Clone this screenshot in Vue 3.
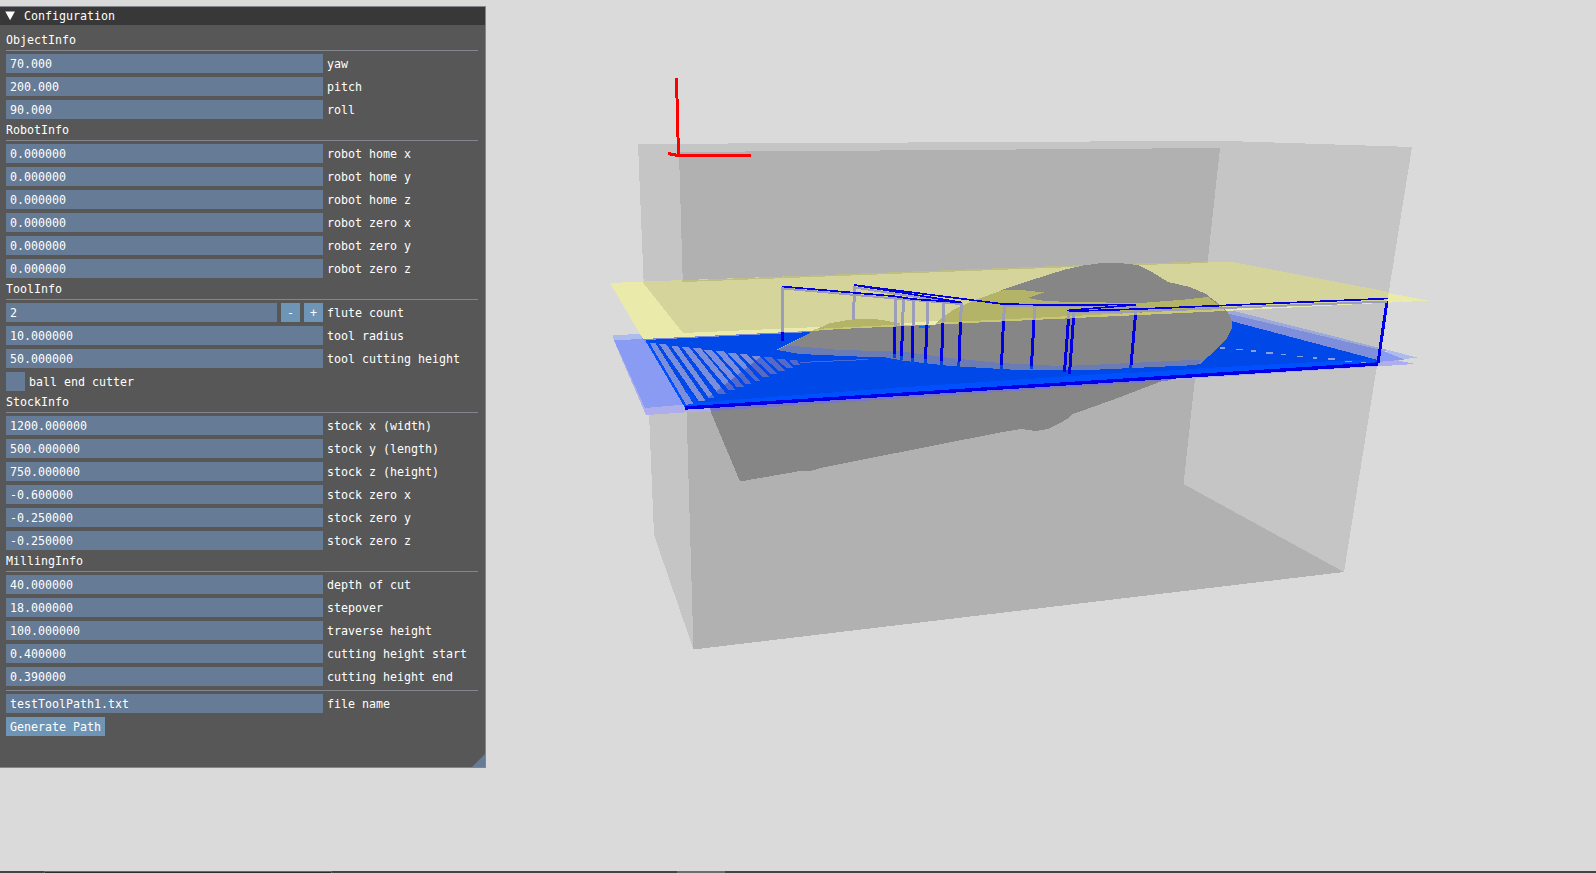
<script setup>
import { ref } from 'vue'

const sections = ref([
  {
    title: 'ObjectInfo',
    fields: [
      { label: 'yaw', value: '70.000' },
      { label: 'pitch', value: '200.000' },
      { label: 'roll', value: '90.000' },
    ],
  },
  {
    title: 'RobotInfo',
    fields: [
      { label: 'robot home x', value: '0.000000' },
      { label: 'robot home y', value: '0.000000' },
      { label: 'robot home z', value: '0.000000' },
      { label: 'robot zero x', value: '0.000000' },
      { label: 'robot zero y', value: '0.000000' },
      { label: 'robot zero z', value: '0.000000' },
    ],
  },
  {
    title: 'ToolInfo',
    fields: [
      { label: 'flute count', value: '2', type: 'stepper' },
      { label: 'tool radius', value: '10.000000' },
      { label: 'tool cutting height', value: '50.000000' },
      { label: 'ball end cutter', type: 'check' },
    ],
  },
  {
    title: 'StockInfo',
    fields: [
      { label: 'stock x (width)', value: '1200.000000' },
      { label: 'stock y (length)', value: '500.000000' },
      { label: 'stock z (height)', value: '750.000000' },
      { label: 'stock zero x', value: '-0.600000' },
      { label: 'stock zero y', value: '-0.250000' },
      { label: 'stock zero z', value: '-0.250000' },
    ],
  },
  {
    title: 'MillingInfo',
    fields: [
      { label: 'depth of cut', value: '40.000000' },
      { label: 'stepover', value: '18.000000' },
      { label: 'traverse height', value: '100.000000' },
      { label: 'cutting height start', value: '0.400000' },
      { label: 'cutting height end', value: '0.390000' },
    ],
  },
])

// Uncut gaps between neighbouring passes
const gaps = [
  'M649 343.3h6.5l39 62h-8z',
  'M659.3 344.3h7l39.7 57h-7z',
  'M671 345.7h6.5l37.5 52.6h-6z',
  'M682.3 347.3h7l37 46.7h-8z',
  'M693.3 348.3h7.5l35 42h-7z',
  'M704 350h8l32.5 37.3h-7.5z',
  'M716 351.3h8l28 33h-6z',
  'M728 353h7.5l24.5 28h-5z',
  'M739.3 354h7.5l23 23.3h-7z',
  'M751.3 355.7h8l18.5 18.6h-7z',
  'M763.3 357.3h8l15 14h-7z',
  'M776 359h8l9.5 9.3h-6.5z',
  'M789.3 360h7.5l3.5 5.3h-7z',
]

// Retract moves: dimmed while behind the upper plane, solid underneath
const plunges = [
  { a: [782.5, 287], b: [782.5, 332], c: [782.5, 341] },
  { a: [854.5, 286], b: [853.5, 320], c: null },
  { a: [895.5, 297], b: [895, 327], c: [894.5, 354], d: [894.5, 358] },
  { a: [903.5, 299], b: [902.5, 326], c: [901.5, 356], d: [901.5, 360] },
  { a: [913.5, 300], b: [913, 326], c: [912.5, 358], d: [912.5, 362] },
  { a: [927.5, 301], b: [927, 325], c: [925.5, 359], d: [925.5, 364] },
  { a: [943.5, 302], b: [943, 323], c: [941.5, 361], d: [941.5, 366] },
  { a: [961.5, 303], b: [960.5, 322], c: [959, 362], d: [958.5, 367] },
  { a: [1004.5, 305], b: [1003.5, 321], c: [1001.5, 365], d: [1001.5, 369] },
  { a: [1034.5, 306], b: [1034, 320], c: [1031.5, 366], d: [1031, 369] },
  { a: [1069, 311], b: [1068.5, 319], c: [1064.5, 372] },
  { a: [1074, 313], b: [1073.5, 318], c: [1069.5, 374] },
  { a: [1136, 306], b: [1135.5, 315], c: [1131, 365], d: [1130.5, 369] },
]

const seg = (p, q) => `M${p[0]} ${p[1]}L${q[0]} ${q[1]}`

const dashes = [
  [1220, 347, 5], [1236, 348.5, 7], [1251, 350, 5], [1266, 352, 7], [1281, 353.5, 5],
  [1297, 355.5, 6], [1313, 357, 4], [1328, 358, 7], [1345, 360.5, 7], [1361, 361.5, 5],
]
</script>

<template>
  <main class="viewport">
    <svg class="scene" width="1596" height="873" viewBox="0 0 1596 873" shape-rendering="crispEdges">
      <!-- stock -->
      <path fill="#c5c5c5" d="M638 144L1181 141H1228L1412 147L1344 572L693.5 649.5L654 535Z" />
      <path fill="#b1b1b1" d="M679 152L1220 148L1183.5 484L1344 572L693.5 649.5Z" />

      <!-- part, lower body -->
      <path fill="#868686" d="M706 400L710 410L740 481.5L803 470.5H812L825 467L1000 432.5L1021 429L1036 431L1048 429L1060 423L1067 419L1073 414L1115 399L1170 378L1180 340L900 350Z" />

      <!-- cutting planes -->
      <path fill="#adbceb" d="M613 335L642 334L646 342H614ZM1388 350L1419 358L1378 360Z" />
      <path fill="#9daad9" d="M1222 308L1388 350L1376 356L1222 318Z" />
      <path fill="#aeaeec" d="M614 341L646 415L1415 364L1378 356L686 400Z" />
      <path fill="#7777c6" d="M707 402L711 411L1166 381L1200 370L760 396Z" />
      <path fill="#899bf3" d="M614 340L647 339L690 404L645 408ZM1378 349L1404 359.5L1378 362Z" />
      <path fill="#7f8edb" d="M1226 313L1379 349.5L1378 361L1226 330Z" />
      <path fill="#7b8cdb" d="M642 338.5L812 331V334L646 342Z" />

      <!-- milled area -->
      <path fill="#0048e8" d="M646 340L812 332L776 350L1200 356L1231 321L1376 359.5L1378 363L686 407.5Z" />
      <g fill="#7b8edb">
        <path v-for="g in gaps" :key="g" :d="g" />
      </g>
      <clipPath id="shadow">
        <path d="M704 401L763 355L810 357V372L720 402Z" />
      </clipPath>
      <g fill="#556ac8" clip-path="url(#shadow)">
        <path v-for="g in gaps" :key="g" :d="g" />
      </g>
      <path stroke="#0050ff" stroke-width="2.5" fill="none" d="M647 341L686 407M685 389L698 405" />
      <path fill="#0050ff" d="M697 402.5L900 387.5L1140 371.5L1372 359L1378 362L686 407.5V405Z" />
      <path stroke="#0000e8" stroke-width="3.4" fill="none" d="M685 408L1378 364" />
      <path stroke="#4b68d0" stroke-width="1" fill="none" d="M800 362.5L822 361.5L868 359.5" />
      <g fill="#8d9ede">
        <rect v-for="d in dashes" :key="d[0]" :x="d[0]" :y="d[1]" :width="d[2]" height="1.5" />
      </g>

      <!-- yellow plane -->
      <path fill="#eaeaab" d="M610 283L671 280.5L1208 261.5H1228L1428 300.7L1223 311L643 339Z" />
      <path fill="#d5d49b" d="M643 281.5L1205 261.5H1230L1389 292L1387 302L1223 309L683 333L644 284Z" />
      <path stroke="#bfbe87" stroke-width="1.6" fill="none" d="M682 281.3L900 272.8L1080 266L1208 262.2" />

      <!-- part, upper body -->
      <path fill="#868686" d="M777 350L795 341L815 330L895 326L940 324L1003 289.5L1030 280.5L1065 269.5L1083 265.5L1100 263.3H1122L1138 265L1152 272L1168 282L1190 287L1206 294L1220 305L1228 313L1232 321V328L1227 338L1217 349L1200 364L1080 370L900 358Z" />
      <path fill="#b4b469" d="M815 330L829 323.5L845 320.5L858 319H875L888 321L897 323L902 324L938 321L953 310L975 300L1003 290L1026 290.5L1044 292.5L1028 298L1045 301L1072 302L1140 303L1180 300L1208 297L1223 308L1140 312.5L900 325Z" />
      <path fill="#c8c773" d="M815 329L900 324.5L1223 308.5L1225 311L1140 315L840 329L812 331Z" />
      <path fill="#eeecaf" d="M899 324L930 321H938L934 325H900Z" />
      <path fill="#0070ff" d="M919 326H930V327.5H919Z" />
      <path fill="#6b7cb5" d="M777 350L789 345.5L840 350L903 351.5L920 354L950 358L1000 363L1060 366L1090 365L1130 363L1202 359.5L1197 365L1130 369.5H1010L950 366L905 361L880 357.5L800 354Z" />
      <path fill="#0048e8" d="M777 351L800 354L840 356.5H880L905 361L950 366L1010 369.5H1100L1198 365L1205 368L1130 373L880 380Z" />
      <path stroke="#4b68d0" stroke-width="1" fill="none" d="M800 362.5L822 361.5L868 359.5" />

      <!-- rapid moves -->
      <g fill="none" stroke-width="3">
        <template v-for="(p, i) in plunges" :key="i">
          <path stroke="#9c9cbb" :d="seg(p.a, p.b)" />
          <path v-if="p.c" stroke="#0000e2" :d="seg(p.b, p.c)" />
          <path v-if="p.d" stroke="#0048d8" :d="seg(p.c, p.d)" />
        </template>
        <path stroke="#0000ee" d="M1387 301L1378 363" />
      </g>
      <path fill="none" stroke="#9c9cbb" stroke-width="2" d="M783 288.5L895 298.5L961 304M855 287.5L961 304M1004 306L1135 306.5M1069 312.5L1137 311.5L1387 301.5M1074 310L1135 307.5" />
      <path fill="none" stroke="#0000e2" stroke-width="1.7" d="M782 286.5L895 296.3L912 299L962 302.5M854 285L910 294L962 302.5M854 285L1003 304L1048 305L1136 304.5M1067 310.5L1136 304.8M1069 311.3L1140 309L1388 298.5" />

      <!-- origin axes -->
      <path fill="none" stroke="#f00" stroke-width="3" d="M676.5 78L678.5 156M675 155.5H750.5M668 153.5L678 155.5" />
    </svg>

    <section class="panel">
      <header class="titlebar">
        <svg class="arrow" width="10" height="10" viewBox="0 0 10 10"><path fill="#fff" d="M.3 .5H9.9L5.1 9.2Z" /></svg>
        <span>Configuration</span>
      </header>
      <div class="content">
        <template v-for="s in sections" :key="s.title">
          <div class="heading">{{ s.title }}</div>
          <div class="separator"></div>
          <div v-for="f in s.fields" :key="f.label" class="row">
            <span v-if="f.type === 'check'" class="check"></span>
            <div v-else-if="f.type === 'stepper'" class="control">
              <span class="input">{{ f.value }}</span>
              <button class="step">-</button>
              <button class="step">+</button>
            </div>
            <div v-else class="control"><span class="input">{{ f.value }}</span></div>
            <span class="label">{{ f.label }}</span>
          </div>
        </template>
        <div class="separator"></div>
        <div class="row">
          <div class="control"><span class="input">testToolPath1.txt</span></div>
          <span class="label">file name</span>
        </div>
        <button class="generate">Generate Path</button>
      </div>
      <svg class="grip" width="13" height="13" viewBox="0 0 13 13"><path fill="#667b96" d="M13 0V13H0Z" /></svg>
    </section>

    <footer class="taskbar">
      <span class="task-open"></span>
      <span class="task-active"></span>
    </footer>
  </main>
</template>

<style>
body {
  margin: 0;
  overflow: hidden;
}
</style>

<style scoped>
.viewport {
  position: relative;
  width: 1596px;
  height: 873px;
  overflow: hidden;
  background: #dadada;
  font: 11.63px/13px "DejaVu Sans Mono", monospace;
  color: #fff;
}
.scene {
  display: block;
}
.panel {
  position: absolute;
  left: 0;
  top: 6px;
  box-sizing: border-box;
  width: 486px;
  height: 762px;
  border: 1px solid #84868e;
  border-left: 0;
  background: #575757;
  white-space: pre;
}
.titlebar {
  display: flex;
  align-items: center;
  gap: 9px;
  height: 18px;
  padding-left: 5px;
  background: #383838;
}
.content {
  display: flex;
  flex-direction: column;
  gap: 4px;
  padding: 8px 7px 0 6px;
}
.heading {
  height: 13px;
  line-height: 15px;
}
.separator {
  height: 1px;
  margin-bottom: -1px;
  background: #84868e;
}
.row {
  display: flex;
  gap: 4px;
  height: 19px;
}
.label {
  padding-top: 4px;
}
.control {
  display: flex;
  gap: 4px;
  width: 317px;
}
.input {
  flex: 1;
  padding: 4px 4px 2px;
  background: #667b96;
}
.check {
  width: 19px;
  height: 19px;
  background: #667b96;
}
.step,
.generate {
  height: 19px;
  padding: 4px 0 2px;
  border: 0;
  background: #6f95b6;
  color: inherit;
  font: inherit;
}
.step {
  width: 19px;
}
.generate {
  align-self: flex-start;
  width: 99px;
}
.grip {
  position: absolute;
  right: 0;
  bottom: 0;
}
.taskbar {
  position: absolute;
  left: 0;
  right: 0;
  bottom: 0;
  display: flex;
  height: 2px;
  background: #434343;
}
.task-open {
  box-sizing: border-box;
  width: 288px;
  margin-left: 44px;
  border: 1px solid #666;
  border-bottom: 0;
  background: #302c2e;
}
.task-active {
  width: 48px;
  margin-left: 345px;
  background: #6c6c6c;
}
</style>
